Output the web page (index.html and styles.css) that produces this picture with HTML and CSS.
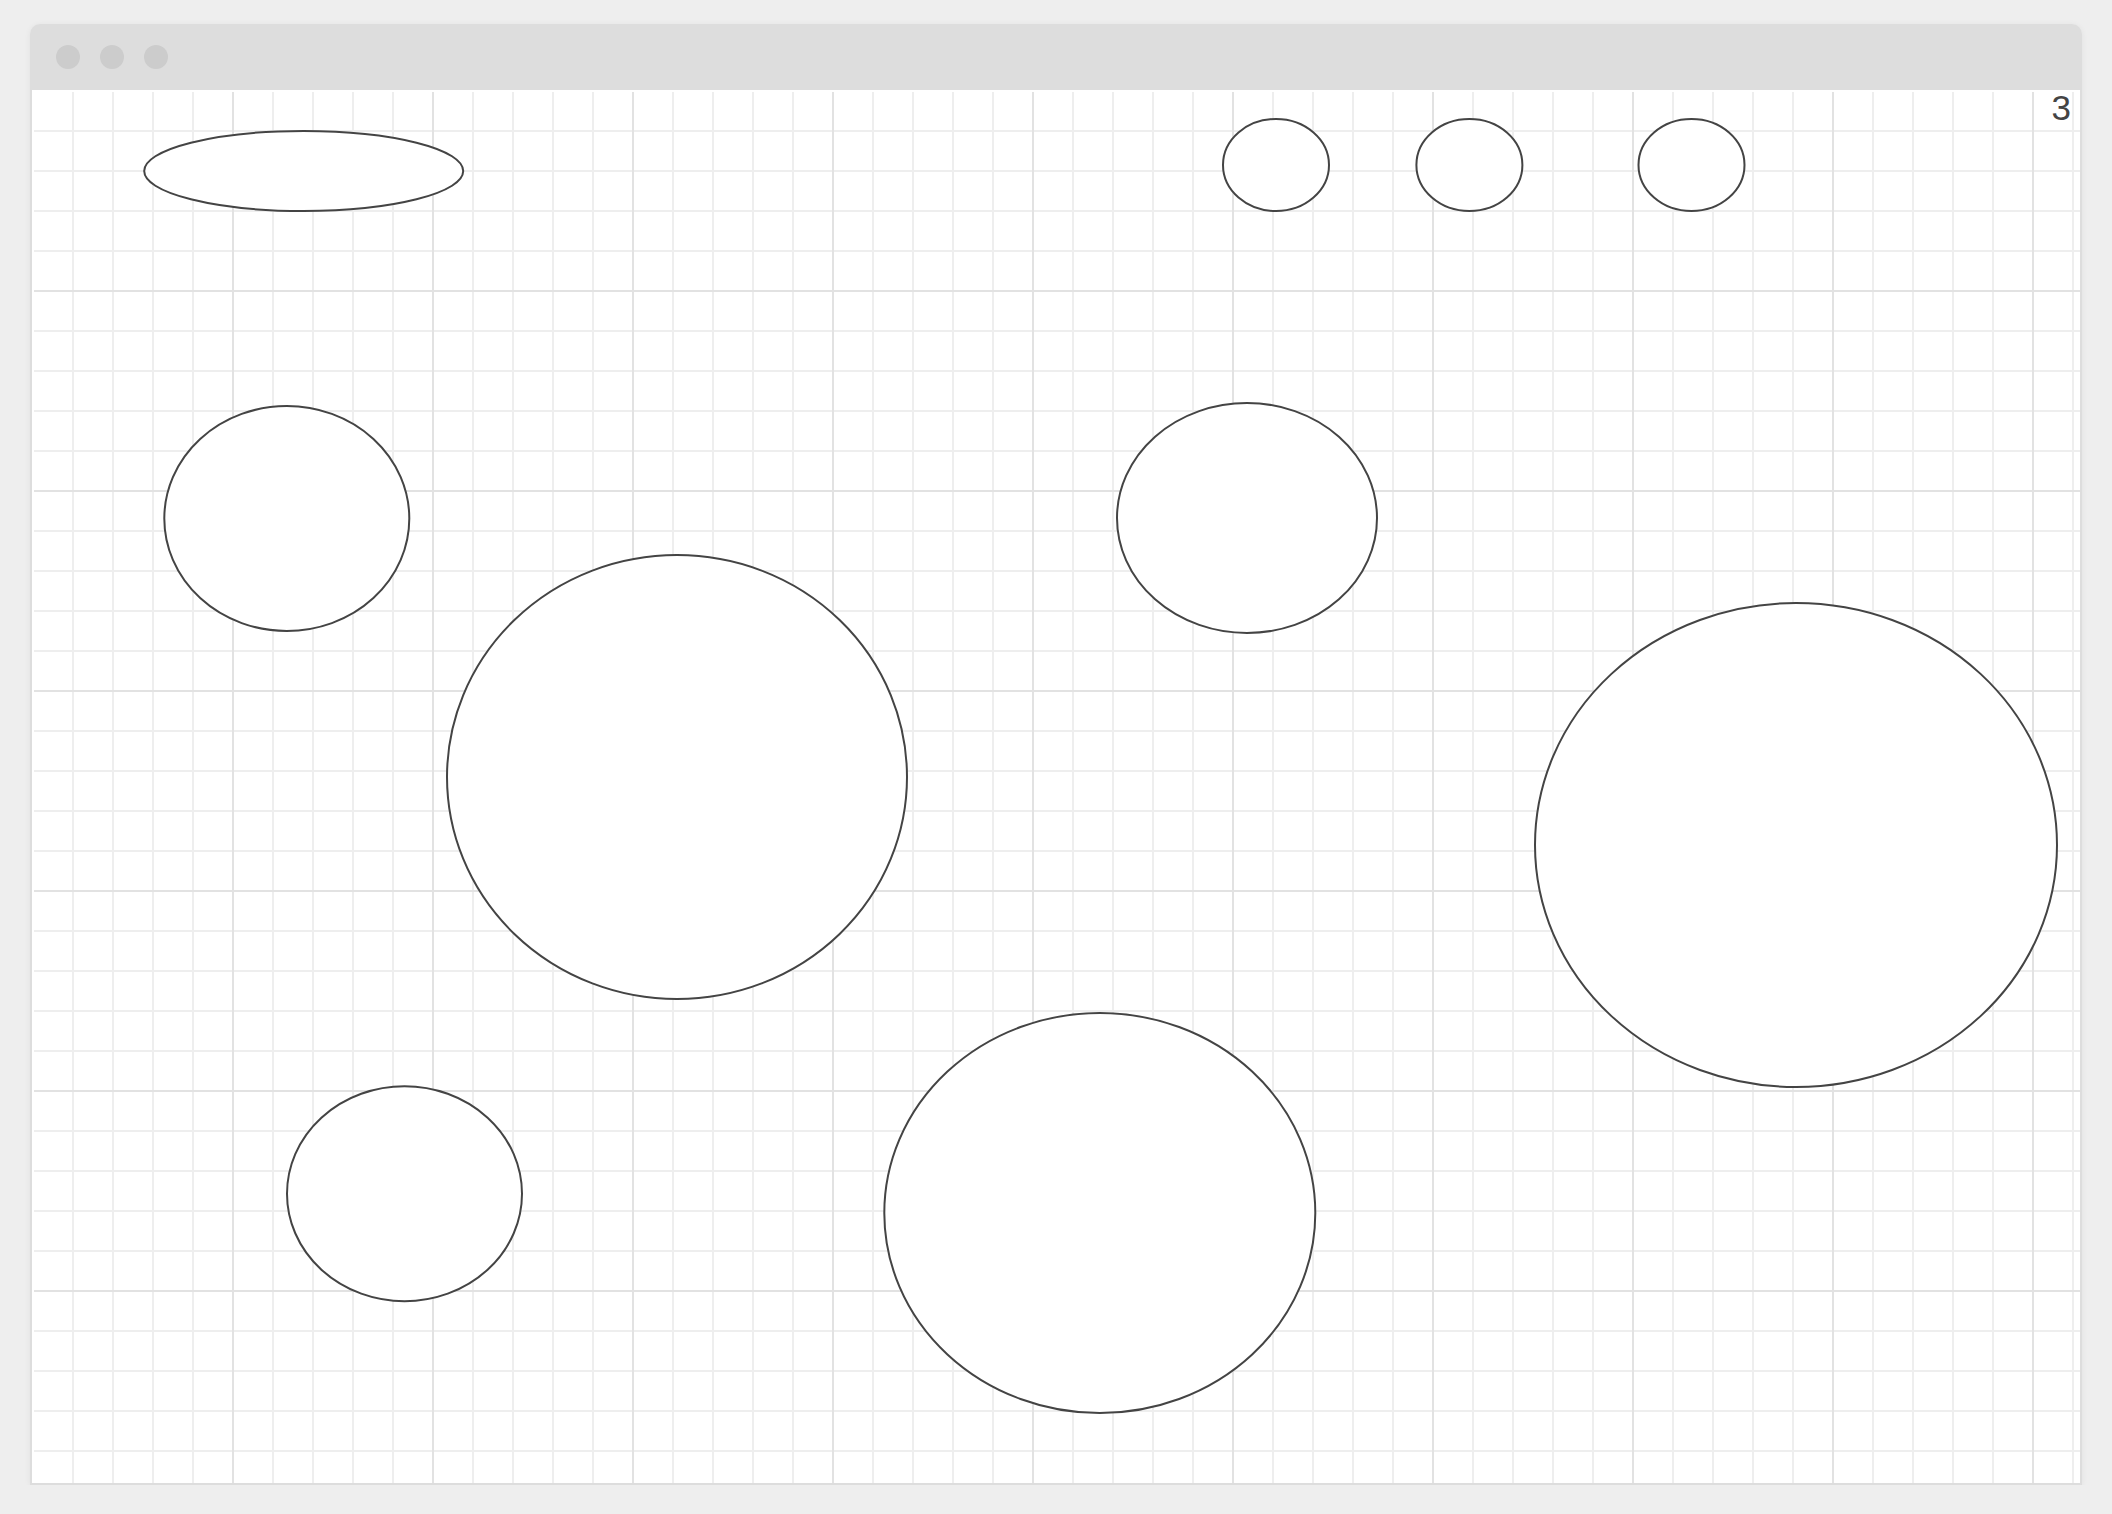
FILE: index.html
```html
<!DOCTYPE html>
<html>
<head>
    <meta charset="UTF-8">
    <title>Sketch</title>
    <link rel="stylesheet" href="styles.css">
</head>
<body>
<div class="window">
    <div class="titlebar">
        <span class="dot"></span>
        <span class="dot"></span>
        <span class="dot"></span>
    </div>
    <div class="canvas">
        <div class="grid">
            <!-- shapes on the drawing board -->
            <svg class="shapes" width="2046" height="1392" viewBox="0 0 2046 1392">
                <ellipse cx="269.7" cy="79" rx="159.5" ry="40"/>
                <ellipse cx="1242" cy="73" rx="53" ry="46"/>
                <ellipse cx="1435.4" cy="73" rx="53" ry="46"/>
                <ellipse cx="1657.5" cy="73" rx="53" ry="46"/>
                <ellipse cx="252.8" cy="426.5" rx="122.5" ry="112.5"/>
                <ellipse cx="643" cy="685" rx="230" ry="222"/>
                <ellipse cx="1213" cy="426" rx="130" ry="115"/>
                <ellipse cx="1762" cy="753" rx="261" ry="242"/>
                <ellipse cx="370.5" cy="1101.7" rx="117.5" ry="107.5"/>
                <ellipse cx="1065.8" cy="1121" rx="215.5" ry="200"/>
            </svg>
            <div class="page-num">3</div>
        </div>
    </div>
</div>
</body>
</html>
```

FILE: styles.css
```css
body {
    margin: 0;
    background: #eeeeee;
    font-family: "Liberation Sans", Arial, sans-serif;
}

.window {
    margin: 24px 0 0 30px;
    width: 2052px;
    height: 1461px;
    display: flex;
    flex-direction: column;
    border-radius: 10px 10px 0 0;
    box-shadow: 0 1px 6px rgba(0,0,0,0.06);
}

.titlebar {
    height: 66px;
    flex: none;
    display: flex;
    align-items: center;
    gap: 20px;
    padding-left: 26px;
    background: #dddddd;
    border-radius: 10px 10px 0 0;
}

.dot {
    width: 24px;
    height: 24px;
    border-radius: 50%;
    background: #cccccc;
}

.canvas {
    flex: 1;
    display: flex;
    padding: 2px 0 0 2px;
    background: white;
    border: 2px solid #dddddd;
    border-top: none;
}

.grid {
    flex: 1;
    position: relative;
    background-image:
        linear-gradient(to right, #e2e2e2 2px, transparent 2px),
        linear-gradient(to bottom, #e2e2e2 2px, transparent 2px),
        linear-gradient(to right, #eeeeee 2px, transparent 2px),
        linear-gradient(to bottom, #eeeeee 2px, transparent 2px);
    background-size: 200px 200px, 200px 200px, 40px 40px, 40px 40px;
    background-position: 198px 198px, 198px 198px, 38px 38px, 38px 38px;
}

.shapes {
    position: absolute;
    left: 0;
    top: 0;
}

.shapes ellipse {
    fill: white;
    stroke: #444444;
    stroke-width: 2;
}

.page-num {
    position: absolute;
    top: -2px;
    right: 9px;
    font-family: "Liberation Sans", Arial, sans-serif;
    font-size: 35px;
    line-height: 1;
    color: #444444;
}
```
